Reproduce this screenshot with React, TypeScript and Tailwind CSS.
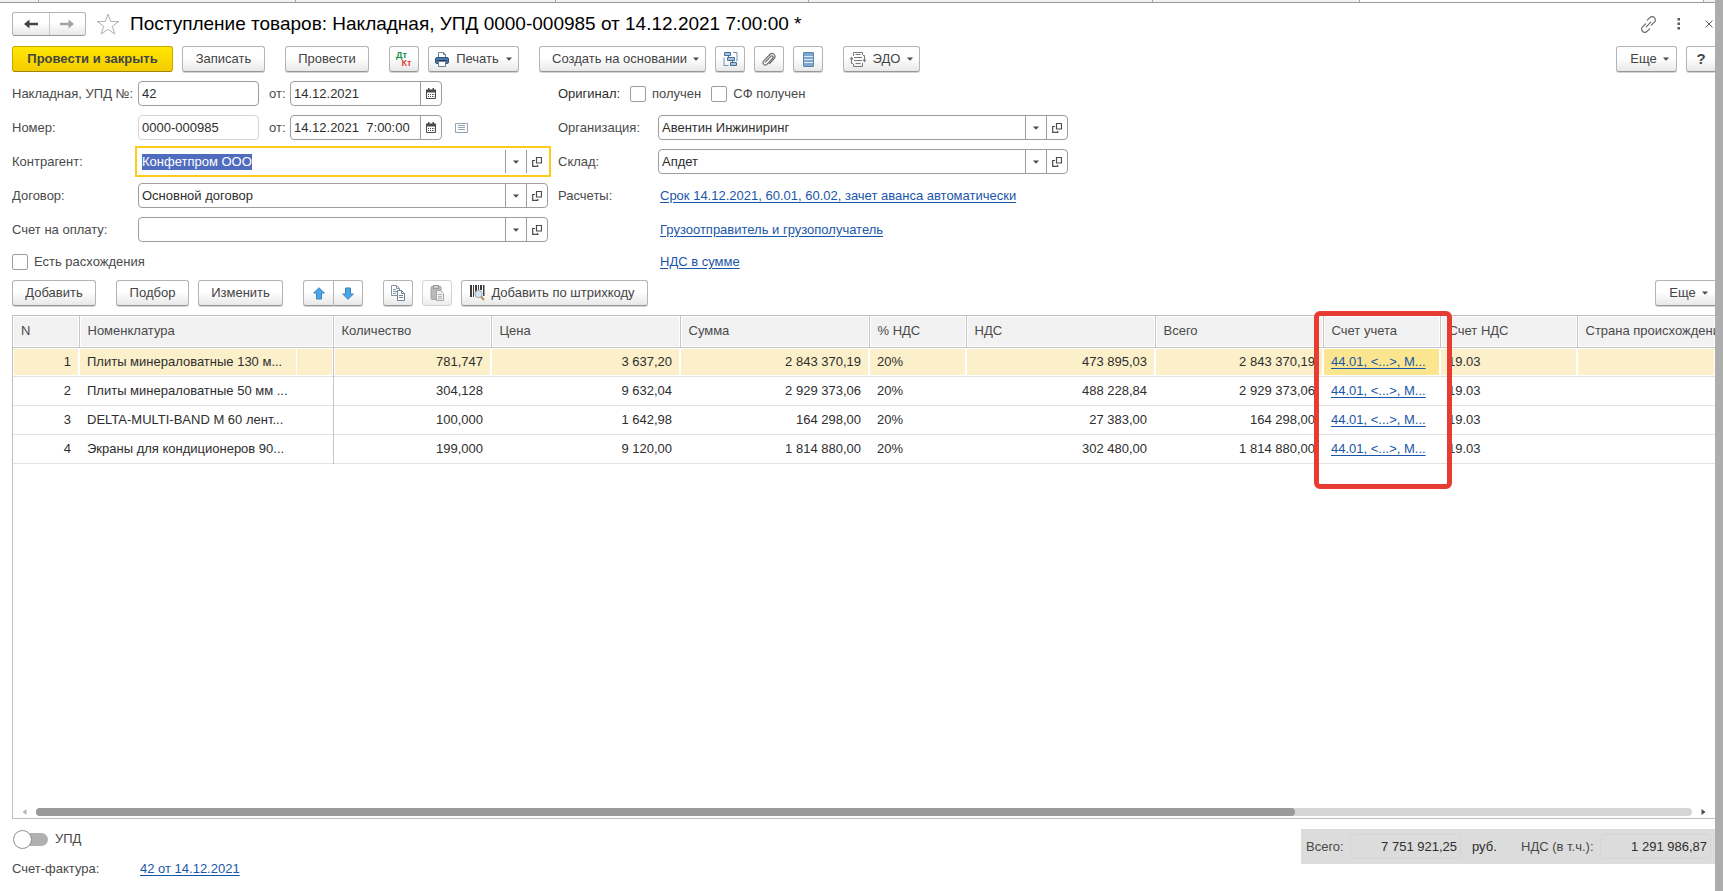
import React from "react";

const BTN =
  "flex h-[26px] shrink-0 items-center justify-center rounded-[3px] border border-[#b4b4b4] border-b-[#979797] bg-linear-to-b from-white from-45% to-[#e8e8e8] text-[#444444] shadow-[0_1px_0_#d4d4d4]";
const LINK = "text-[#1a56a8] underline underline-offset-2";

function Caret({ className = "" }: { className?: string }) {
  return (
    <svg width="6" height="4" viewBox="0 0 6 4" className={className} aria-hidden="true">
      <path d="M0 0.5h6L3 3.8z" fill="#4a4a4a" />
    </svg>
  );
}

function OpenIcon() {
  return (
    <svg width="10" height="10" viewBox="0 0 10 10" fill="none" stroke="#4a4a4a" aria-hidden="true">
      <path d="M4.5 0.5h5v5.5h-5z" strokeWidth="1.2" />
      <path d="M3 3.5H0.7v5.8h5V8" strokeWidth="1.2" />
    </svg>
  );
}

function CalendarIcon() {
  return (
    <svg width="10" height="11" viewBox="0 0 10 11" aria-hidden="true">
      <path d="M0.5 2.5h9v8h-9z" fill="#fff" stroke="#4a4a4a" />
      <path d="M0 1.5h10v3H0z" fill="#4a4a4a" />
      <path d="M2 0h1.5v2H2zM6.5 0H8v2H6.5z" fill="#4a4a4a" />
      <path d="M2 6h1v1H2zM4 6h1v1H4zM6 6h1v1H6zM2 8h1v1H2zM4 8h1v1H4zM6 8h1v1H6z" fill="#4a4a4a" />
      <path d="M7.6 6h.8v1h-.8zM7.6 8h.8v1h-.8z" fill="#4a4a4a" />
    </svg>
  );
}

function ArrowIcon({ color, flip }: { color: string; flip?: boolean }) {
  return (
    <svg width="14" height="10" viewBox="0 0 14 10" aria-hidden="true" className={flip ? "rotate-180" : ""}>
      <path d="M0 5L5.5 0.5V3.8H14V6.2H5.5V9.5z" fill={color} />
    </svg>
  );
}

function PrinterIcon() {
  return (
    <svg width="14" height="15" viewBox="0 0 14 15" aria-hidden="true">
      <path d="M3.5 6V0.5h5l2 2V6" fill="#fff" stroke="#6d8199" />
      <path d="M8.5 0.5v2h2" fill="none" stroke="#6d8199" />
      <rect x="0.5" y="5.5" width="13" height="6" rx="1.5" fill="#4a76a6" stroke="#2f5680" />
      <path d="M2 8.5h10" stroke="#23405f" />
      <path d="M3.5 9.5h7v5h-7z" fill="#fff" stroke="#6d8199" />
    </svg>
  );
}

function StructureIcon() {
  return (
    <svg width="15" height="16" viewBox="0 0 15 16" fill="none" aria-hidden="true">
      <path d="M1.5 1.5h6v3h-6zM4.5 6.5h7v3h-7zM7.5 11.5h6v3h-6z" fill="#a9c3de" stroke="#44719f" />
      <path d="M10 1.5h4v8h-1M1 6.5v8H5.5" stroke="#6f93b8" />
      <path d="M5.5 4.5v2M9.5 9.5v2" stroke="#44719f" />
    </svg>
  );
}

function ClipIcon() {
  return (
    <svg width="14" height="15" viewBox="0 0 14 15" fill="none" aria-hidden="true">
      <path
        d="M3.6 9.8L8.9 4.1a1.4 1.4 0 0 1 2 1.9L5.2 12.2a2.3 2.3 0 0 1-3.5-3.1L8 2.3a3 3 0 0 1 4.4 4L7.6 11.6"
        stroke="#6b6b6b"
        strokeWidth="1.2"
        strokeLinecap="round"
      />
    </svg>
  );
}

function ListIcon() {
  return (
    <svg width="11" height="15" viewBox="0 0 11 15" aria-hidden="true">
      <rect x="0.5" y="0.5" width="10" height="14" rx="0.5" fill="#7fa6cc" stroke="#5c84ad" />
      <path d="M1 4.5h9M1 7.5h9M1 10.5h9" stroke="#dce8f4" />
    </svg>
  );
}

function EdoIcon() {
  return (
    <svg width="16" height="15" viewBox="0 0 16 15" fill="none" stroke="#7a7a7a" aria-hidden="true">
      <path d="M3.5 4V0.5h9V3M3.5 12v2.5h9V11" />
      <path d="M5.5 2.5h5M4 5.5h8M4 8.5h8M5.5 11.5h5" />
      <path d="M1.5 11.5V7M1.5 11.5H3M14.5 3.5V8M14.5 3.5H13" />
      <path d="M-0.5 7.5l2-3 2 3zM12.5 7.5l2 3 2-3z" fill="#7a7a7a" stroke="none" />
    </svg>
  );
}

function MoveIcon({ down }: { down?: boolean }) {
  return (
    <svg width="12" height="13" viewBox="0 0 12 13" aria-hidden="true" className={down ? "rotate-180" : ""}>
      <path d="M6 0.7L11.3 6H8.5v6h-5V6H0.7z" fill="#4aa8ea" stroke="#3a81b5" strokeLinejoin="round" />
    </svg>
  );
}

function CopyIcon() {
  return (
    <svg width="16" height="16" viewBox="0 0 16 16" aria-hidden="true">
      <path d="M1.5 0.5h5l3 3v7h-8z" fill="#fff" stroke="#8592a0" />
      <path d="M6.5 0.5v3h3M3 4.5h3M3 6.5h4M3 8.5h3" fill="none" stroke="#8592a0" />
      <path d="M7.5 5.5h4l3 3v7h-7z" fill="#fff" stroke="#708296" />
      <path d="M11.5 5.5v3h3M9 10.5h4M9 12.5h4" fill="none" stroke="#708296" />
    </svg>
  );
}

function PasteIcon() {
  return (
    <svg width="15" height="16" viewBox="0 0 15 16" aria-hidden="true">
      <rect x="1" y="1.5" width="10" height="13" rx="1" fill="#b9b9b9" stroke="#a5a5a5" />
      <rect x="3.5" y="0.5" width="5" height="3" fill="#d0d0d0" stroke="#9a9a9a" />
      <path d="M6.5 5.5h4l3 3v7h-7z" fill="#eeeeee" stroke="#a8a8a8" />
      <path d="M8 9.5h4M8 11.5h4M8 13.5h4" stroke="#b4b4b4" />
    </svg>
  );
}

function BarcodeIcon() {
  return (
    <svg width="15" height="16" viewBox="0 0 15 16" aria-hidden="true">
      <path d="M0 0h2v12H0zM3 0h1v12H3zM5 0h2v11H5zM8 0h1v5H8zM10 0h2v5h-2zM13 0h1.5v11H13z" fill="#3e3e3e" />
      <path d="M11 11.5l2.5 3" stroke="#c08a52" strokeWidth="2" strokeLinecap="round" />
      <circle cx="8.5" cy="9" r="3.6" fill="#d5e6f5" stroke="#9aa5b0" />
    </svg>
  );
}

function DateField({ id, label, value }: { id: string; label: string; value: string }) {
  return (
    <>
      <label htmlFor={id} className="w-[31px] pl-[10px]">
        {label}
      </label>
      <div className="flex h-full w-[152px] overflow-hidden rounded-[4px] border border-[#9d9d9d]">
        <input id={id} defaultValue={value} className="min-w-0 flex-1 px-[3px] text-[#2e2e2e] outline-none" />
        <button type="button" aria-label="Выбрать дату" className="flex w-[21px] items-center justify-center border-l border-[#9d9d9d]">
          <CalendarIcon />
        </button>
      </div>
    </>
  );
}

function Combo({ id, value, active }: { id: string; value: string; active?: boolean }) {
  return (
    <div
      className={
        active
          ? "flex h-full w-[410px] border border-transparent outline-2 outline-offset-1 outline-[#fccb1b]"
          : "flex h-full w-[410px] rounded-[4px] border border-[#9d9d9d]"
      }
    >
      <input
        id={id}
        defaultValue={value}
        autoFocus={active}
        onFocus={(e) => e.currentTarget.select()}
        className="my-[2px] min-w-0 flex-1 bg-transparent px-[3px] text-[#2e2e2e] outline-none selection:bg-[#4f6cbe] selection:text-white"
      />
      <button type="button" aria-label="Выбрать из списка" className="flex w-[21px] items-center justify-center border-l border-[#9d9d9d]">
        <Caret />
      </button>
      <button type="button" aria-label="Открыть" className="flex w-[21px] items-center justify-center border-l border-[#9d9d9d]">
        <OpenIcon />
      </button>
    </div>
  );
}

function Check({ id, label, className = "" }: { id: string; label: string; className?: string }) {
  return (
    <div className={"flex items-center gap-[6px] " + className}>
      <input
        id={id}
        type="checkbox"
        className="size-4 appearance-none rounded-[2px] border border-[#9d9d9d] bg-white checked:bg-[#fccb1b]"
      />
      <label htmlFor={id}>{label}</label>
    </div>
  );
}

const ROW = "flex h-[25px] items-center";

const COLUMNS = ["N", "Номенклатура", "Количество", "Цена", "Сумма", "% НДС", "НДС", "Всего", "Счет учета", "Счет НДС", "Страна происхождения"];

const ROWS = [
  ["1", "Плиты минераловатные 130 м...", "781,747", "3 637,20", "2 843 370,19", "20%", "473 895,03", "2 843 370,19", "44.01, <...>, М...", "19.03", ""],
  ["2", "Плиты минераловатные 50 мм ...", "304,128", "9 632,04", "2 929 373,06", "20%", "488 228,84", "2 929 373,06", "44.01, <...>, М...", "19.03", ""],
  ["3", "DELTA-MULTI-BAND М 60 лент...", "100,000", "1 642,98", "164 298,00", "20%", "27 383,00", "164 298,00", "44.01, <...>, М...", "19.03", ""],
  ["4", "Экраны для кондиционеров 90...", "199,000", "9 120,00", "1 814 880,00", "20%", "302 480,00", "1 814 880,00", "44.01, <...>, М...", "19.03", ""],
];

const RIGHT_ALIGNED = [0, 2, 3, 4, 6, 7];
const ACCOUNT = 8;

function ItemsTable() {
  return (
    <table className="w-full table-fixed border-collapse">
      <colgroup>
        <col className="w-[66px]" />
        <col className="w-[254px]" />
        <col className="w-[158px]" />
        <col className="w-[189px]" />
        <col className="w-[189px]" />
        <col className="w-[97px]" />
        <col className="w-[189px]" />
        <col className="w-[168px]" />
        <col className="w-[117px]" />
        <col className="w-[137px]" />
        <col />
      </colgroup>
      <thead>
        <tr className="h-[31px]">
          {COLUMNS.map((name, i) => (
            <th
              key={name}
              scope="col"
              className="relative border-r border-b border-[#c6c6c6] bg-[#f2f2f2] px-2 text-left font-normal whitespace-nowrap text-[#4a4a4a] shadow-[inset_0_0_0_1px_#ffffff] last:border-r-0"
            >
              {name}
              {i === ACCOUNT && (
                <div className="pointer-events-none absolute -top-[5px] -right-[12px] -left-[10px] z-10 h-[178px] rounded-[6px] border-5 border-[#e63c32]" />
              )}
            </th>
          ))}
        </tr>
      </thead>
      <tbody>
        {ROWS.map((row, r) => (
          <tr key={row[0]} className="h-[29px] border-b border-[#e2e2e2]">
            {row.map((cell, c) => {
              const align = RIGHT_ALIGNED.includes(c) ? "text-right" : "text-left";
              const fill =
                r !== 0 ? "" : c === ACCOUNT ? "bg-[#fbe68f] shadow-[inset_0_0_0_1px_#ffffff]" : "bg-[#fbf0ca] shadow-[inset_0_0_0_1px_#ffffff]";
              const line = c === 1 ? "border-r border-r-[#c6c6c6]" : "";
              return (
                <td key={c} className={`relative px-2 whitespace-nowrap text-[#2e2e2e] ${align} ${fill} ${line}`}>
                  {c === ACCOUNT ? (
                    <a href="#account" className={LINK}>
                      {cell}
                    </a>
                  ) : (
                    cell
                  )}
                  {r === 0 && c === 1 && <span className="absolute inset-y-0 right-9 w-px bg-white" />}
                </td>
              );
            })}
          </tr>
        ))}
      </tbody>
    </table>
  );
}

export default function App() {
  return (
    <div className="flex min-h-screen bg-white font-['Liberation_Sans',Arial,sans-serif] text-[13px] leading-4 text-[#4a4a4a]">
      <div className="flex min-w-0 flex-1 flex-col overflow-hidden">
        <div className="flex h-[3px] shrink-0 border-b border-[#9a9a9a] bg-[#f2f2f2]">
          <span className="w-[39px] border-r border-[#a8a8a8]" />
          <span className="w-[257px] border-r border-[#a8a8a8]" />
          <span className="w-[260px] border-r border-[#a8a8a8]" />
          <span className="w-[253px] border-r border-[#a8a8a8]" />
          <span className="w-[344px] border-r border-[#a8a8a8]" />
          <span className="w-[207px] border-r border-[#a8a8a8]" />
          <span className="w-[344px] border-r border-[#a8a8a8] bg-white" />
        </div>

        <header className="mt-2 flex h-[26px] items-center pl-3">
          <div className="flex h-6 w-[74px] rounded-[3px] border border-[#b4b4b4] border-b-[#979797] bg-linear-to-b from-white from-45% to-[#e8e8e8]">
            <button type="button" aria-label="Назад" className="flex flex-1 items-center justify-center border-r border-[#c9c9c9]">
              <ArrowIcon color="#444444" />
            </button>
            <button type="button" aria-label="Вперед" className="flex flex-1 items-center justify-center">
              <ArrowIcon color="#a3a3a3" flip />
            </button>
          </div>
          <button type="button" aria-label="В избранное" className="ml-[10px] flex">
            <svg width="24" height="22" viewBox="0 0 24 22" fill="none" stroke="#b0b0b0" aria-hidden="true">
              <path d="M12 1.2l2.7 7.3h8.1l-6.5 4.8 2.5 7.7L12 16.3 5.2 21l2.5-7.7-6.5-4.8h8.1z" />
            </svg>
          </button>
          <h1 className="ml-[10px] text-[19px] leading-6 whitespace-nowrap text-black">
            Поступление товаров: Накладная, УПД 0000-000985 от 14.12.2021 7:00:00 *
          </h1>
          <div className="ml-auto flex items-center pr-[2px]">
            <button type="button" aria-label="Получить ссылку" className="flex">
              <svg width="17" height="17" viewBox="0 0 17 17" fill="none" stroke="#6a6a6a" strokeWidth="1.2" strokeLinecap="round" aria-hidden="true">
                <path d="M7.3 4.2l2.5-2.5a3.1 3.1 0 0 1 4.6 0 3.1 3.1 0 0 1 0 4.4l-3 3M9.6 12.8l-2.5 2.5a3.1 3.1 0 0 1-4.6 0 3.1 3.1 0 0 1 0-4.4l3-3M6.2 10.8l4.6-4.6" />
              </svg>
            </button>
            <button type="button" aria-label="Меню" className="ml-5 flex">
              <svg width="4" height="12" viewBox="0 0 4 12" fill="#5a5a5a" aria-hidden="true">
                <path d="M0.5 0h2.5v2.5h-2.5zM0.5 4.5h2.5v2.5h-2.5zM0.5 9h2.5v2.5h-2.5z" />
              </svg>
            </button>
            <button type="button" aria-label="Закрыть" className="ml-6 flex">
              <svg width="8" height="8" viewBox="0 0 8 8" stroke="#5a5a5a" aria-hidden="true">
                <path d="M0.5 0.5l7 7M7.5 0.5l-7 7" />
              </svg>
            </button>
          </div>
        </header>

        <div className="mt-[9px] flex gap-[9px] pl-3">
          <button
            type="button"
            className="flex h-[26px] w-[161px] items-center justify-center rounded-[3px] border border-[#c8a600] border-b-[#9f8400] bg-linear-to-b from-[#ffe800] to-[#f3cc00] font-bold text-[#444444]"
          >
            Провести и закрыть
          </button>
          <button type="button" className={`${BTN} w-[83px]`}>Записать</button>
          <button type="button" className={`${BTN} ml-[11px] w-[84px]`}>Провести</button>
          <button type="button" className={`${BTN} ml-[11px] w-[30px]`}>
            <span className="flex flex-col text-[9px] leading-[8px] font-bold">
              <span className="pr-[5px] text-[#12924a]">Дт</span>
              <span className="pl-[5px] text-[#e0403c]">Кт</span>
            </span>
          </button>
          <button type="button" className={`${BTN} w-[91px] gap-[7px]`}>
            <PrinterIcon />
            Печать
            <Caret />
          </button>
          <button type="button" className={`${BTN} ml-[11px] w-[167px] gap-[6px] pl-[6px]`}>
            Создать на основании
            <Caret />
          </button>
          <button type="button" aria-label="Структура подчиненности" className={`${BTN} w-[30px]`}>
            <StructureIcon />
          </button>
          <button type="button" aria-label="Присоединенные файлы" className={`${BTN} w-[30px]`}>
            <ClipIcon />
          </button>
          <button type="button" aria-label="Список" className={`${BTN} w-[30px]`}>
            <ListIcon />
          </button>
          <button type="button" className={`${BTN} ml-[11px] w-[77px] gap-[7px]`}>
            <EdoIcon />
            ЭДО
            <Caret />
          </button>
          <button type="button" className={`${BTN} ml-auto w-[61px] gap-[6px] pl-[6px]`}>
            Еще
            <Caret />
          </button>
          <button type="button" className={`${BTN} w-[29px] rounded-r-none border-r-0 text-[15px] font-bold`}>?</button>
        </div>

        <div className="mt-[9px] flex gap-[10px] pl-3">
          <div className="flex flex-col gap-[9px]">
            <div className={ROW}>
              <label htmlFor="doc" className="w-[126px] whitespace-nowrap">Накладная, УПД №:</label>
              <input id="doc" defaultValue="42" className="h-full w-[121px] rounded-[4px] border border-[#9d9d9d] px-[3px] text-[#2e2e2e]" />
              <DateField id="docDate" label="от:" value="14.12.2021" />
            </div>
            <div className={ROW}>
              <label htmlFor="num" className="w-[126px]">Номер:</label>
              <input id="num" readOnly defaultValue="0000-000985" className="h-full w-[121px] rounded-[4px] border border-[#d6d6d6] px-[3px] text-[#2e2e2e]" />
              <DateField id="numDate" label="от:" value="14.12.2021  7:00:00" />
              <svg width="13" height="10" viewBox="0 0 13 10" className="ml-[13px]" aria-hidden="true">
                <path d="M0.5 0.5h12v9h-12z" fill="#fff" stroke="#93a3b3" />
                <path d="M3 2.5h7M3 4.5h7M3 6.5h7" stroke="#93a3b3" />
              </svg>
            </div>
            <div className={ROW}>
              <label htmlFor="partner" className="w-[126px]">Контрагент:</label>
              <Combo id="partner" value="Конфетпром ООО" active />
            </div>
            <div className={ROW}>
              <label htmlFor="contract" className="w-[126px]">Договор:</label>
              <Combo id="contract" value="Основной договор" />
            </div>
            <div className={ROW}>
              <label htmlFor="invoice" className="w-[126px]">Счет на оплату:</label>
              <Combo id="invoice" value="" />
            </div>
            <Check id="diff" label="Есть расхождения" className="h-[22px]" />
          </div>

          <div className="flex flex-col gap-[9px]">
            <div className={`${ROW} gap-[10px]`}>
              <span className="w-[62px] text-[#2e2e2e]">Оригинал:</span>
              <Check id="received" label="получен" />
              <Check id="sfReceived" label="СФ получен" />
            </div>
            <div className={ROW}>
              <label htmlFor="org" className="w-[100px]">Организация:</label>
              <Combo id="org" value="Авентин Инжиниринг" />
            </div>
            <div className={ROW}>
              <label htmlFor="store" className="w-[100px]">Склад:</label>
              <Combo id="store" value="Апдет" />
            </div>
            <div className={ROW}>
              <span className="w-[102px]">Расчеты:</span>
              <a href="#terms" className={LINK}>Срок 14.12.2021, 60.01, 60.02, зачет аванса автоматически</a>
            </div>
            <div className={`${ROW} pl-[102px]`}>
              <a href="#shipper" className={LINK}>Грузоотправитель и грузополучатель</a>
            </div>
            <div className="flex h-[22px] items-center pl-[102px]">
              <a href="#vat" className={LINK}>НДС в сумме</a>
            </div>
          </div>
        </div>

        <div className="mt-[7px] flex gap-[9px] pl-3">
          <button type="button" className={`${BTN} w-[84px]`}>Добавить</button>
          <button type="button" className={`${BTN} ml-[11px] w-[73px]`}>Подбор</button>
          <button type="button" className={`${BTN} w-[85px]`}>Изменить</button>
          <div className="ml-[11px] flex">
            <button type="button" aria-label="Переместить вверх" className={`${BTN} w-[30px] rounded-r-none border-r-0`}>
              <MoveIcon />
            </button>
            <button type="button" aria-label="Переместить вниз" className={`${BTN} w-[30px] rounded-l-none`}>
              <MoveIcon down />
            </button>
          </div>
          <button type="button" aria-label="Копировать" className={`${BTN} ml-[11px] w-[30px]`}>
            <CopyIcon />
          </button>
          <button type="button" disabled aria-label="Вставить" className="flex h-[26px] w-[30px] items-center justify-center rounded-[3px] border border-[#d2d2d2] bg-linear-to-b from-white from-45% to-[#ececec]">
            <PasteIcon />
          </button>
          <button type="button" className={`${BTN} w-[187px] gap-[6px] pr-1`}>
            <BarcodeIcon />
            Добавить по штрихкоду
          </button>
          <button type="button" className={`${BTN} ml-auto w-[60px] gap-[6px] rounded-r-none border-r-0 pl-[6px]`}>
            Еще
            <Caret />
          </button>
        </div>

        <div className="mt-[9px] ml-3 flex flex-1 flex-col border-y border-l border-[#c2c0ba]">
          <ItemsTable />
          <div className="mt-auto flex h-[12px] items-center gap-[9px] pb-[1px] pl-[9px] pr-[9px]">
            <svg width="5" height="6" viewBox="0 0 5 6" aria-hidden="true">
              <path d="M4.5 0v6L0.5 3z" fill="#b5b5b5" />
            </svg>
            <div className="h-2 flex-1 rounded-full bg-[#d6d6d6]">
              <div className="h-2 w-[76%] rounded-full bg-[#999999]" />
            </div>
            <svg width="5" height="6" viewBox="0 0 5 6" aria-hidden="true">
              <path d="M0.5 0v6L4.5 3z" fill="#4a4a4a" />
            </svg>
          </div>
        </div>

        <footer className="flex h-[72px] shrink-0 justify-between pl-3">
          <div className="flex flex-col pt-[10px]">
            <div className="flex items-center gap-[7px]">
              <button type="button" role="switch" aria-checked="false" aria-labelledby="upd" className="flex h-5 w-9 items-center pl-px">
                <span className="z-1 size-[19px] shrink-0 rounded-full border border-[#8f8f8f] bg-white" />
                <span className="-ml-[10px] h-[13px] flex-1 rounded-r-full bg-[#b0b0b0]" />
              </button>
              <span id="upd">УПД</span>
            </div>
            <div className="mt-3 flex">
              <span className="w-32">Счет-фактура:</span>
              <a href="#sf" className={LINK}>42 от 14.12.2021</a>
            </div>
          </div>
          <div className="mt-[10px] flex h-[35px] items-center bg-[#dcdcdc] pr-1 pl-[5px]">
            <label htmlFor="total" className="w-11">Всего:</label>
            <input id="total" readOnly defaultValue="7 751 921,25" className="h-[25px] w-[111px] rounded-[4px] border border-[#d5d5d5] px-[3px] text-right text-[#2e2e2e]" />
            <span className="w-[60px] pl-[11px] text-[#2e2e2e]">руб.</span>
            <label htmlFor="vatTotal" className="w-[79px] whitespace-nowrap">НДС (в т.ч.):</label>
            <input id="vatTotal" readOnly defaultValue="1 291 986,87" className="h-[25px] w-[111px] rounded-[4px] border border-[#d5d5d5] px-[3px] text-right text-[#2e2e2e]" />
          </div>
        </footer>
      </div>
      <div className="w-2 shrink-0 bg-[#adadad]" />
    </div>
  );
}
